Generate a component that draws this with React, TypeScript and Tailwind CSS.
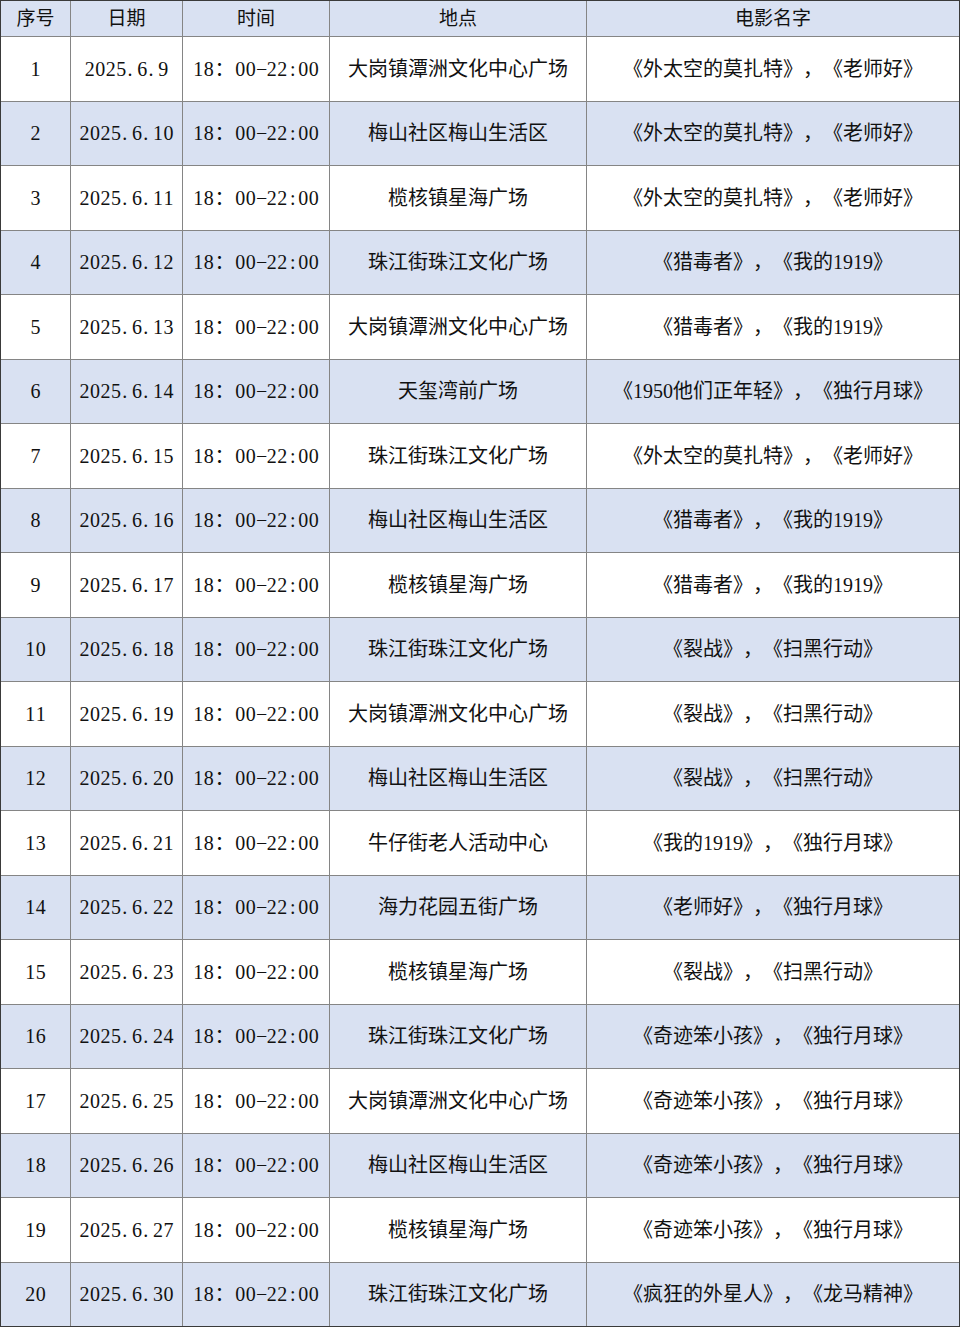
import React from "react";

const rows: [string, string, string, string][] = [
  ["1", "2025.6.9", "大岗镇潭洲文化中心广场", "《外太空的莫扎特》，《老师好》"],
  ["2", "2025.6.10", "梅山社区梅山生活区", "《外太空的莫扎特》，《老师好》"],
  ["3", "2025.6.11", "榄核镇星海广场", "《外太空的莫扎特》，《老师好》"],
  ["4", "2025.6.12", "珠江街珠江文化广场", "《猎毒者》，《我的1919》"],
  ["5", "2025.6.13", "大岗镇潭洲文化中心广场", "《猎毒者》，《我的1919》"],
  ["6", "2025.6.14", "天玺湾前广场", "《1950他们正年轻》，《独行月球》"],
  ["7", "2025.6.15", "珠江街珠江文化广场", "《外太空的莫扎特》，《老师好》"],
  ["8", "2025.6.16", "梅山社区梅山生活区", "《猎毒者》，《我的1919》"],
  ["9", "2025.6.17", "榄核镇星海广场", "《猎毒者》，《我的1919》"],
  ["10", "2025.6.18", "珠江街珠江文化广场", "《裂战》，《扫黑行动》"],
  ["11", "2025.6.19", "大岗镇潭洲文化中心广场", "《裂战》，《扫黑行动》"],
  ["12", "2025.6.20", "梅山社区梅山生活区", "《裂战》，《扫黑行动》"],
  ["13", "2025.6.21", "牛仔街老人活动中心", "《我的1919》，《独行月球》"],
  ["14", "2025.6.22", "海力花园五街广场", "《老师好》，《独行月球》"],
  ["15", "2025.6.23", "榄核镇星海广场", "《裂战》，《扫黑行动》"],
  ["16", "2025.6.24", "珠江街珠江文化广场", "《奇迹笨小孩》，《独行月球》"],
  ["17", "2025.6.25", "大岗镇潭洲文化中心广场", "《奇迹笨小孩》，《独行月球》"],
  ["18", "2025.6.26", "梅山社区梅山生活区", "《奇迹笨小孩》，《独行月球》"],
  ["19", "2025.6.27", "榄核镇星海广场", "《奇迹笨小孩》，《独行月球》"],
  ["20", "2025.6.30", "珠江街珠江文化广场", "《疯狂的外星人》，《龙马精神》"],
];

function Mono({ text }: { text: string }) {
  return (
    <span className="inline-flex items-baseline">
      {Array.from(text).map((ch, i) => {
        if (ch === "：") {
          return (
            <span key={i} className="inline-block w-[21px] text-center">
              {ch}
            </span>
          );
        }
        if (ch === ".") {
          return (
            <span key={i} className="inline-block w-[10.5px] text-left pl-[1px]">
              {ch}
            </span>
          );
        }
        return (
          <span key={i} className="inline-block w-[10.5px] text-center">
            {ch === "-" ? "−" : ch}
          </span>
        );
      })}
    </span>
  );
}

const font = "font-['Liberation_Serif','Noto_Sans_CJK_SC',serif]";

function Cell({
  children,
  blue,
}: {
  children: React.ReactNode;
  blue: boolean;
}) {
  return (
    <div
      className={`flex items-center justify-center whitespace-nowrap text-[20px] leading-none text-[#111111] [text-spacing-trim:space-all] ${
        blue ? "bg-[#d9e1f2]" : "bg-white"
      }`}
    >
      {children}
    </div>
  );
}

export default function App() {
  const headers = ["序号", "日期", "时间", "地点", "电影名字"];
  return (
    <div
      className={`${font} w-[960px] h-[1327px] border border-[#3a3a3a] bg-[#858585] grid gap-px grid-cols-[69px_111px_146px_256px_minmax(0,1fr)] grid-rows-[35px_repeat(20,minmax(0,1fr))]`}
    >
      {headers.map((h) => (
        <div
          key={h}
          className="flex items-center justify-center bg-[#d9e1f2] text-[19px] leading-none text-[#111111] font-normal"
        >
          {h}
        </div>
      ))}
      {rows.map(([n, d, place, movie], idx) => {
        const blue = idx % 2 === 1;
        return (
          <React.Fragment key={n}>
            <Cell blue={blue}>
              <Mono text={n} />
            </Cell>
            <Cell blue={blue}>
              <Mono text={d} />
            </Cell>
            <Cell blue={blue}>
              <Mono text="18：00-22:00" />
            </Cell>
            <Cell blue={blue}>{place}</Cell>
            <Cell blue={blue}>
              <span className="[text-spacing-trim:space-all]">{movie}</span>
            </Cell>
          </React.Fragment>
        );
      })}
    </div>
  );
}
